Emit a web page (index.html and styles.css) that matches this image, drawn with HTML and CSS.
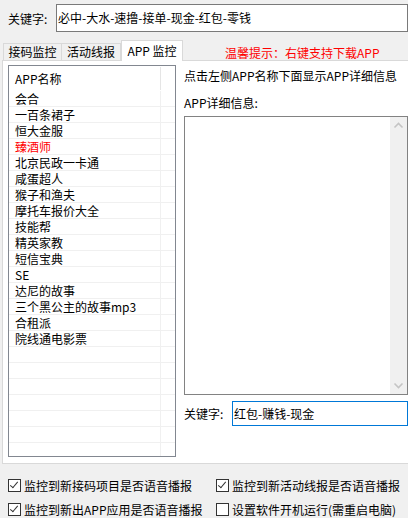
FILE: index.html
```html
<!DOCTYPE html>
<html lang="zh-CN">
<head>
    <meta charset="UTF-8">
    <meta name="viewport" content="width=device-width, initial-scale=1.0">
    <title>APP 监控</title>
    <link rel="stylesheet" href="styles.css">
</head>
<body>
    <div class="window">
        <div class="keyrow">
            <label class="keylabel">关键字:</label>
            <div class="keyinput">必中-大水-速撸-接单-现金-红包-零钱</div>
        </div>

        <div class="tabbar">
            <div class="tab">接码监控</div>
            <div class="tab">活动线报</div>
            <div class="tab active">APP 监控</div>
            <div class="tip">温馨提示：右键支持下载APP</div>
        </div>

        <div class="page">
            <div class="list">
                <div class="list-head"><div class="cell">APP名称</div></div>
                <div class="row"><div class="cell">会合</div></div>
                <div class="row"><div class="cell">一百条裙子</div></div>
                <div class="row"><div class="cell">恒大金服</div></div>
                <div class="row red"><div class="cell">臻酒师</div></div>
                <div class="row"><div class="cell">北京民政一卡通</div></div>
                <div class="row"><div class="cell">咸蛋超人</div></div>
                <div class="row"><div class="cell">猴子和渔夫</div></div>
                <div class="row"><div class="cell">摩托车报价大全</div></div>
                <div class="row"><div class="cell">技能帮</div></div>
                <div class="row"><div class="cell">精英家教</div></div>
                <div class="row"><div class="cell">短信宝典</div></div>
                <div class="row"><div class="cell">SE</div></div>
                <div class="row"><div class="cell">达尼的故事</div></div>
                <div class="row"><div class="cell">三个黑公主的故事mp3</div></div>
                <div class="row"><div class="cell">合租派</div></div>
                <div class="row"><div class="cell">院线通电影票</div></div>
                <div class="row"><div class="cell"></div></div>
                <div class="row"><div class="cell"></div></div>
                <div class="row"><div class="cell"></div></div>
                <div class="row"><div class="cell"></div></div>
                <div class="row"><div class="cell"></div></div>
                <div class="row"><div class="cell"></div></div>
                <div class="row"><div class="cell"></div></div>
            </div>

            <div class="detail">
                <div class="hint">点击左侧APP名称下面显示APP详细信息</div>
                <div class="detail-title">APP详细信息:</div>
                <div class="memo">
                    <div class="memo-body"></div>
                    <div class="vscroll">
                        <svg width="17" height="17" viewBox="0 0 17 17"><path d="M4.5 10.5 L8.5 6.5 L12.5 10.5" fill="none" stroke="#c4c4c4" stroke-width="1.6"/></svg>
                        <svg width="17" height="17" viewBox="0 0 17 17"><path d="M4.5 6.5 L8.5 10.5 L12.5 6.5" fill="none" stroke="#c4c4c4" stroke-width="1.6"/></svg>
                    </div>
                </div>
                <div class="keyrow2">
                    <label class="keylabel2">关键字:</label>
                    <div class="keyinput2">红包-赚钱-现金</div>
                </div>
            </div>
        </div>

        <div class="options">
            <div class="opt"><span class="box checked"></span>监控到新接码项目是否语音播报</div>
            <div class="opt"><span class="box checked"></span>监控到新活动线报是否语音播报</div>
            <div class="opt"><span class="box checked"></span>监控到新出APP应用是否语音播报</div>
            <div class="opt"><span class="box"></span>设置软件开机运行(需重启电脑)</div>
        </div>
    </div>
</body>
</html>
```

FILE: styles.css
```css
body {
    margin: 0;
    background-color: #f0f0f0;
    font-family: "Noto Sans CJK SC", "Noto Sans", sans-serif;
    font-size: 12px;
    color: #000;
    overflow: hidden;
}
.window {
    width: 408px;
    height: 518px;
    overflow: hidden;
}
.keyrow {
    display: flex;
    align-items: center;
    padding: 4px 0 0 8px;
    height: 28px;
}
.keylabel {
    width: 48px;
}
.keyinput {
    box-sizing: border-box;
    width: 352px;
    height: 28px;
    line-height: 26px;
    padding-left: 1px;
    background: white;
    border: 1px solid #7a7a7a;
    white-space: nowrap;
}
.tabbar {
    display: flex;
    align-items: flex-end;
    height: 20px;
    margin-top: 8px;
    padding-left: 3px;
}
.tab {
    box-sizing: border-box;
    width: 59px;
    height: 17px;
    line-height: 16px;
    text-align: center;
    border: 1px solid #d9d9d9;
    border-bottom: none;
    background-color: #f0f0f0;
}
.tab + .tab {
    border-left: none;
}
.tab.active {
    width: 62px;
    height: 21px;
    margin-bottom: -1px;
    line-height: 20px;
    background: white;
    border-left: 1px solid #d9d9d9;
    position: relative;
    z-index: 1;
}
.tip {
    color: #ff0000;
    margin-left: 42px;
    align-self: center;
    padding-top: 4px;
}
.page {
    box-sizing: border-box;
    display: flex;
    width: 420px;
    height: 404px;
    margin-left: 2px;
    padding: 4px 0 0 5px;
    background: white;
    border: 1px solid #d9d9d9;
}
.list {
    box-sizing: border-box;
    width: 168px;
    height: 392px;
    border: 1px solid #828790;
    overflow: hidden;
    flex-shrink: 0;
}
.list-head {
    height: 24px;
}
.list-head .cell {
    line-height: 23px;
    border-right: 1px solid #e5e5e5;
    height: 23px;
    margin-top: 1px;
}
.cell {
    box-sizing: border-box;
    width: 152px;
    height: 100%;
    padding-left: 6px;
    border-right: 1px solid #f0f0f0;
    white-space: nowrap;
}
.row {
    box-sizing: border-box;
    height: 16px;
    line-height: 15px;
    border-bottom: 1px solid #f0f0f0;
}
.row.red {
    color: #ff0000;
}
.detail {
    display: flex;
    flex-direction: column;
    margin-left: 8px;
    width: 224px;
}
.hint {
    margin-top: 3px;
    line-height: 16px;
}
.detail-title {
    margin-top: 11px;
    line-height: 16px;
}
.memo {
    box-sizing: border-box;
    display: flex;
    height: 279px;
    margin-top: 5px;
    border: 1px solid #828282;
    background: white;
}
.memo-body {
    flex: 1;
}
.vscroll {
    width: 17px;
    display: flex;
    flex-direction: column;
    justify-content: space-between;
    background-color: #f0f0f0;
}
.vscroll svg {
    display: block;
}
.keyrow2 {
    display: flex;
    align-items: center;
    margin-top: 6px;
}
.keylabel2 {
    width: 48px;
}
.keyinput2 {
    box-sizing: border-box;
    width: 176px;
    height: 25px;
    line-height: 23px;
    padding-left: 1px;
    border: 1px solid #0078d7;
    background: white;
}
.options {
    display: grid;
    grid-template-columns: 208px 1fr;
    row-gap: 8px;
    padding: 13px 0 0 8px;
}
.opt {
    display: flex;
    align-items: center;
    height: 16px;
    white-space: nowrap;
}
.box {
    box-sizing: border-box;
    width: 13px;
    height: 13px;
    margin-right: 3px;
    border: 1px solid #333;
    background: white;
    position: relative;
}
.box.checked::after {
    content: "";
    position: absolute;
    left: 3px;
    top: 0px;
    width: 3px;
    height: 7px;
    border: solid #333;
    border-width: 0 1.5px 1.5px 0;
    transform: rotate(40deg);
}
```
